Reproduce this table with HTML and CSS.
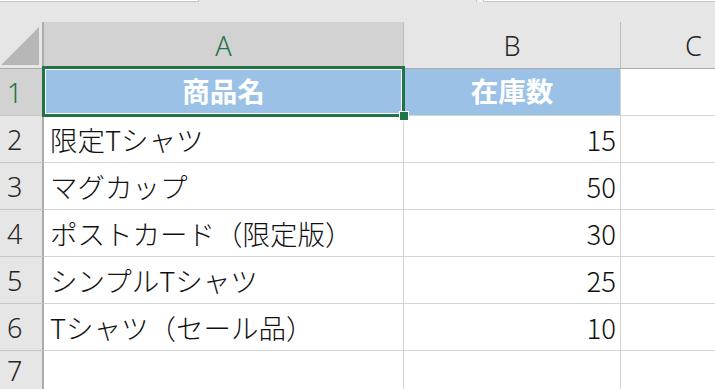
FILE: index.html
```html
<!DOCTYPE html>
<html lang="ja">
    <head>
        <meta charset="UTF-8" />
        <meta name="viewport" content="width=device-width, initial-scale=1.0" />
        <title>在庫一覧</title>
        <link rel="stylesheet" href="styles.css">
    </head>
    <body>
        <div class="sheet">
            <!-- bottom edge of the name box and formula bar -->
            <div class="bar-edge">
                <div class="name-box"></div>
                <div class="splitter"></div>
                <div class="formula-box"></div>
            </div>

            <div class="grid">
                <div class="corner">
                    <svg width="38" height="38" viewBox="0 0 38 38">
                        <polygon points="0,38 38,38 38,0" fill="#b7b7b7" />
                    </svg>
                </div>
                <div class="col-head active">A</div>
                <div class="col-head">B</div>
                <div class="col-head">C</div>

                <div class="row-head active">1</div>
                <div class="cell title selected">
                    商品名
                    <span class="selection"><span class="handle"></span></span>
                </div>
                <div class="cell title">在庫数</div>
                <div class="cell"></div>

                <div class="row-head">2</div>
                <div class="cell">限定Tシャツ</div>
                <div class="cell num">15</div>
                <div class="cell"></div>

                <div class="row-head">3</div>
                <div class="cell">マグカップ</div>
                <div class="cell num">50</div>
                <div class="cell"></div>

                <div class="row-head">4</div>
                <div class="cell">ポストカード（限定版）</div>
                <div class="cell num">30</div>
                <div class="cell"></div>

                <div class="row-head">5</div>
                <div class="cell">シンプルTシャツ</div>
                <div class="cell num">25</div>
                <div class="cell"></div>

                <div class="row-head">6</div>
                <div class="cell">Tシャツ（セール品）</div>
                <div class="cell num">10</div>
                <div class="cell"></div>

                <div class="row-head">7</div>
                <div class="cell"></div>
                <div class="cell"></div>
                <div class="cell"></div>
            </div>
        </div>
    </body>
</html>
```

FILE: styles.css
```css
body {
    margin: 0;
    background: #ffffff;
    overflow: hidden;
}
.sheet {
    width: 715px;
    height: 389px;
    overflow: hidden;
    background: #ffffff;
}
.bar-edge {
    display: flex;
    align-items: flex-start;
    height: 22px;
    background: #e6e6e6;
}
.name-box {
    width: 198px;
    height: 1px;
    background: #ffffff;
    border-right: 1px solid #c6c6c6;
    border-bottom: 1px solid #c6c6c6;
}
.splitter {
    margin-left: 277px;
    width: 6px;
    height: 2px;
    background: #f0f0f0;
    border-left: 1px solid #c6c6c6;
    border-right: 1px solid #c6c6c6;
}
.formula-box {
    flex: 1;
    height: 1px;
    background: #ffffff;
    border-bottom: 1px solid #c6c6c6;
}
.grid {
    display: grid;
    grid-template-columns: 44px 360px 217px 146px;
    grid-template-rows: repeat(7, 47px) 40px;
    font-family: "Noto Sans CJK JP", "Noto Sans", sans-serif;
}
.grid > div {
    box-sizing: border-box;
    border-right: 1px solid #d4d4d4;
    border-bottom: 1px solid #d4d4d4;
    display: flex;
    align-items: center;
    white-space: nowrap;
}
.corner {
    background: #e6e6e6;
    justify-content: flex-end;
    align-items: flex-end !important;
    padding: 0 3px 3px 0;
    border-right: 2px solid #ababab !important;
    border-bottom: 1px solid #ababab !important;
}
.corner svg {
    display: block;
}
.col-head {
    justify-content: center;
    background: #e6e6e6;
    color: #262626;
    font-family: "Noto Sans", sans-serif;
    font-weight: 300;
    font-size: 27px;
    line-height: 1;
    border-right-color: #bdbdbd !important;
    border-bottom-color: #ababab !important;
}
.row-head {
    background: #e6e6e6;
    color: #262626;
    font-family: "Noto Sans", sans-serif;
    font-weight: 300;
    font-size: 27px;
    line-height: 1;
    padding-left: 7px;
    border-right: 2px solid #ababab !important;
    border-bottom-color: #c8c8c8 !important;
}
.col-head.active,
.row-head.active {
    background: #d2d2d2;
    color: #217346;
}
.cell {
    font-size: 27.5px;
    font-weight: 300;
    color: #111111;
    padding: 0 6px;
}
.cell.num {
    justify-content: flex-end;
    padding-right: 4px;
}
.cell.title {
    justify-content: center;
    background: #9bc2e6;
    color: #ffffff;
    font-weight: bold;
    padding-bottom: 4px;
}
.cell.selected {
    position: relative;
}
.selection {
    position: absolute;
    left: -2px;
    top: -3px;
    right: -2px;
    bottom: -2px;
    border: 3px solid #217346;
    box-shadow: inset 0 0 0 1px #ffffff;
}
.handle {
    position: absolute;
    right: -7px;
    bottom: -7px;
    width: 8px;
    height: 8px;
    background: #217346;
    border: 1px solid #ffffff;
}
```
